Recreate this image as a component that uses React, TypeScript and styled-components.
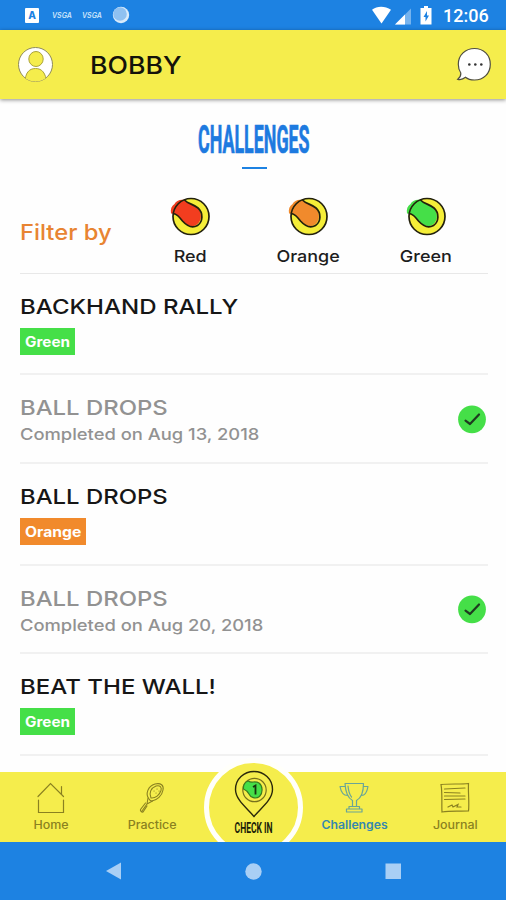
import React from "react";
import styled, { createGlobalStyle } from "styled-components";

const BLUE = "#1d82e2";
const YELLOW = "#f5ed4c";
const GREEN = "#45df48";
const ORANGE = "#f18a2c";
const RED = "#f23d1f";
const OLIVE = "#8a8120";

const GlobalStyle = createGlobalStyle`
  * { box-sizing: border-box; }
  body { margin: 0; background: #fff; font-family: Inter, "Liberation Sans", sans-serif; }
`;

const Screen = styled.div`
  display: flex;
  flex-direction: column;
  width: 506px;
  height: 900px;
  overflow: hidden;
  background: #fefefe;
`;

/* Inline text stretched horizontally to imitate wide and condensed faces. */
const Stretch = styled.span<{ $x: number; $origin?: string }>`
  display: inline-block;
  white-space: nowrap;
  transform: scaleX(${(p) => p.$x});
  transform-origin: ${(p) => p.$origin ?? "left"} center;
`;

const StatusBar = styled.div`
  display: flex;
  flex: none;
  align-items: center;
  justify-content: space-between;
  height: 30px;
  padding: 0 18px 0 25px;
  background: ${BLUE};
`;

const StatusGroup = styled.div<{ $gap: number }>`
  display: flex;
  align-items: center;
  gap: ${(p) => p.$gap}px;
`;

const AppBadge = styled.div`
  width: 14px;
  height: 15px;
  margin-right: 2px;
  border-radius: 1px;
  background: #fff;
  color: ${BLUE};
  font-size: 10px;
  font-weight: 800;
  line-height: 15px;
  text-align: center;
`;

const TinyLogo = styled.span`
  width: 19px;
  padding-top: 1px;
  color: #cfe5fa;
  font-size: 7px;
  font-style: italic;
  font-weight: 600;
  line-height: 10px;
`;

const Clock = styled.span`
  width: 45px;
  margin-left: 4px;
  color: #fff;
  font-family: Roboto, sans-serif;
  font-size: 18px;
  font-weight: 500;
  line-height: 20px;
  padding-top: 2px;
`;

const Header = styled.header`
  display: flex;
  flex: none;
  align-items: center;
  height: 69px;
  padding: 0 14px 0 17px;
  background: ${YELLOW};
  box-shadow: 0 1px 4px rgba(0, 0, 0, 0.45);
`;

const UserName = styled.div`
  flex: 1;
  margin: 2px 0 0 36px;
  color: #14130a;
  font-size: 24px;
  font-weight: 500;
  line-height: 30px;
`;

const Content = styled.main`
  flex: 1;
  min-height: 0;
  padding: 0 18px 0 20px;
`;

const Title = styled.h1`
  display: flex;
  justify-content: center;
  height: 40px;
  margin: 21px 0 0;
  color: #1d7ae0;
  font-family: Roboto, sans-serif;
  font-size: 38px;
  font-weight: 700;
  line-height: 40px;
  -webkit-text-stroke: 0.7px #1d7ae0;
`;

const Underline = styled.div`
  width: 25px;
  height: 2px;
  margin: 7px auto 0;
  background: ${BLUE};
`;

const Filters = styled.div`
  display: flex;
  height: 105px;
  border-bottom: 1px solid #e8e8e8;
`;

const FilterLabel = styled.div`
  width: 111px;
  padding-top: 49px;
  color: #e88432;
  font-size: 22px;
  font-weight: 500;
  line-height: 28px;
`;

const FilterOption = styled.div`
  display: flex;
  flex-direction: column;
  align-items: center;
  width: 118px;
  padding-top: 26px;
  color: #1d1d1d;
  font-size: 16.5px;
  font-weight: 500;
  line-height: 20px;
`;

const BallSlot = styled.div`
  height: 51px;
`;

const Row = styled.section<{ $h: number }>`
  display: flex;
  align-items: center;
  justify-content: space-between;
  height: ${(p) => p.$h}px;
  border-bottom: 2px solid #f1f1f1;
`;

const RowBody = styled.div`
  align-self: flex-start;
  padding-top: 21px;
`;

const RowTitle = styled.div<{ $done?: boolean }>`
  color: ${(p) => (p.$done ? "#929292" : "#161616")};
  font-size: 20.5px;
  font-weight: ${(p) => (p.$done ? 450 : 480)};
  line-height: 24px;
`;

const Completed = styled.div`
  margin-top: 4px;
  color: #929292;
  font-size: 16px;
  font-weight: 500;
  line-height: 20px;
`;

const Tag = styled.div<{ $color: string; $w: number }>`
  width: ${(p) => p.$w}px;
  height: 27px;
  margin-top: 9px;
  padding-left: 5px;
  background: ${(p) => p.$color};
  color: #fff;
  font-size: 14px;
  font-weight: 650;
  line-height: 28px;
`;

const TabBar = styled.nav`
  position: relative;
  display: grid;
  flex: none;
  grid-template-columns: repeat(5, 1fr);
  height: 70px;
  background: ${YELLOW};
`;

const Tab = styled.div<{ $active?: boolean }>`
  display: flex;
  flex-direction: column;
  align-items: center;
  padding-top: 9px;
  color: ${(p) => (p.$active ? "#3588ae" : OLIVE)};
  font-size: 11.3px;
  font-weight: ${(p) => (p.$active ? 600 : 550)};
  line-height: 16px;
`;

const TabIcon = styled.div`
  height: 36px;
`;

/* Raised disc that overlaps the list above and is cut off by the system bar. */
const CheckInClip = styled.div`
  position: absolute;
  left: 204px;
  bottom: 0;
  width: 99px;
  height: 84px;
  overflow: hidden;
`;

const CheckInDisc = styled.div`
  display: flex;
  flex-direction: column;
  align-items: center;
  width: 99px;
  height: 99px;
  padding-top: 7px;
  border: 5px solid #fffffa;
  border-radius: 50%;
  background: ${YELLOW};
`;

const CheckInLabel = styled.div`
  display: flex;
  justify-content: center;
  margin-top: 2px;
  color: #201e08;
  font-family: Roboto, sans-serif;
  font-size: 15.5px;
  font-weight: 700;
  line-height: 16px;
`;

const SystemBar = styled.div`
  display: flex;
  flex: none;
  align-items: center;
  justify-content: center;
  gap: 123px;
  height: 58px;
  background: ${BLUE};
`;

const Ball = ({ color }: { color: string }) => (
  <svg width="42" height="42" viewBox="0 0 42 42" fill="none">
    <circle cx="22" cy="21.500" r="17.800" fill="#f5ee38" />
    <path d="M2 18.500C1.300 14 2.500 11 5.500 9C7 6 11 4 15.500 5C19 9 24 9 28 12.500C33 17 33.500 25 28 29.500C23 33 18 30.500 14 26C10.500 22 8 19 2 18.500Z" fill={color} />
    <path d="M15.500 5C19 9 24.500 9 29 13C34.500 18 34 27 28.500 30.500C23 33.500 17.500 30.500 13.500 26C10.500 22 8 19 4.500 18.500" stroke="#23210c" strokeWidth="1.700" />
    <circle cx="22" cy="21.500" r="18" stroke="#23210c" strokeWidth="1.700" />
  </svg>
);

const CheckBadge = () => (
  <svg width="30" height="30" viewBox="0 0 30 30" fill="none">
    <circle cx="14" cy="15.300" r="13.900" fill={GREEN} />
    <path d="M7.500 16.700L12 20L21 10.500" stroke="#1f3a20" strokeWidth="2.200" strokeLinecap="round" strokeLinejoin="round" />
  </svg>
);

const AvatarIcon = () => (
  <svg width="37" height="37" viewBox="0 0 37 37" fill="none">
    <defs>
      <clipPath id="avatar-disc"><circle cx="18.500" cy="18.500" r="17" /></clipPath>
    </defs>
    <circle cx="18.500" cy="18.500" r="17" fill="#fff" stroke="#8f8b5a" strokeWidth="1" />
    <g clipPath="url(#avatar-disc)" fill={YELLOW} stroke="#aaa23b" strokeWidth="1">
      <ellipse cx="19" cy="13" rx="7.200" ry="7.500" />
      <path d="M8 37C8 27 12 22.500 18.500 22.500S29 27 29.500 37Z" />
    </g>
  </svg>
);

const ChatIcon = () => (
  <svg width="36" height="37" viewBox="0 0 36 37" fill="none">
    <path d="M18.500 2.500C27.500 2.500 34.300 9 34.300 18.300S27.500 34 18.500 34C14.500 34 11.500 33 9.500 31.300C7.500 33 4.500 34 1.800 33.300C4 31.500 5 29.500 4.800 27C3 24.500 2.300 21.500 2.300 18.300C2.300 9 9.500 2.500 18.500 2.500Z" fill="#fff" stroke="#504f42" strokeWidth="1.200" />
    <g fill="#333"><circle cx="13.300" cy="18.500" r="1.300" /><circle cx="19.300" cy="18.500" r="1.300" /><circle cx="25.300" cy="18.500" r="1.300" /></g>
  </svg>
);

const HomeIcon = () => (
  <svg width="30" height="34" viewBox="0 0 30 34" fill="none" stroke={OLIVE} strokeWidth="1.200" strokeLinecap="round">
    <path d="M2 15.500L14.500 2.500L27.500 15.500M25.500 5.500V13M2.500 19V31.500H27.500V19" />
  </svg>
);

const RacketIcon = () => (
  <svg width="30" height="34" viewBox="0 0 30 34" fill="none" stroke={OLIVE} strokeWidth="1.100" strokeLinecap="round">
    <path d="M12 18C8 13 11 5 18 3C24 1.500 27 4.500 26 9C25 15 20 19 15 20C13.500 20 12.500 19 12 18Z" />
    <path d="M14 17C11.500 12 14 7 19 5C23 4 25 6 24 9.500C22.500 14 18.500 17.500 14 17ZM11 17L10 23L15.500 20M10 23L5 30M8.500 22L3.500 28.500C3 29.500 4.500 31.500 6 31L10 25" />
    <path d="M17 10h.1M20 8h.1M19 12h.1M22 10h.1" />
  </svg>
);

const TrophyIcon = () => (
  <svg width="32" height="34" viewBox="0 0 32 34" fill="none" stroke="#6ba596" strokeWidth="1.200" strokeLinecap="round" strokeLinejoin="round">
    <path d="M7 2.500H25.500C25.500 11 24 16.500 18.500 19.500V25M7 2.500C7.500 11 9 16.500 14.500 19.500V25M7 5.500H2C3 11 5.500 14.500 9.500 14.500M25.500 5.500H30C29 11 27 14.500 23.500 14.500M11 25.500H21.500V28H24V31H8.500V28H11ZM11 28H21.500" />
    <path d="M10 5C10.500 10 11 13 13.500 16" />
  </svg>
);

const JournalIcon = () => (
  <svg width="32" height="34" viewBox="0 0 32 34" fill="none" stroke={OLIVE} strokeWidth="1.200" strokeLinecap="round">
    <path d="M2 3.500C12 2.500 21 3.500 29.500 2.500C29 12 30.500 22 29.500 30C20 30.500 12 29.500 3 31C2.500 22 3.500 12 2 3.500Z" />
    <path d="M5.500 8L26 7M5.500 11.500L21 12M5.500 15H26M5.500 18.500L26 18M9 26L13 24L14 26L19 23.500L18 26H22" />
  </svg>
);

const PinIcon = () => (
  <svg width="42" height="48" viewBox="0 0 42 48" fill="none">
    <path d="M21 46.500C15 39 2.500 30 2.500 19.500C2.500 9 11 1.500 21 1.500S39.500 9 39.500 19.500C39.500 30 27 39 21 46.500Z" stroke="#2a280b" strokeWidth="1.400" />
    <circle cx="21.500" cy="20" r="11.700" stroke="#77711d" strokeWidth="1.200" />
    <path d="M10.500 19C10 15 12 11.500 15.500 11C18 13.500 22 10.500 26 13C30 16 30 23 26.500 26.500C22.500 29.500 17.500 27.500 16 24C14.500 21.500 13 20 10.500 19Z" fill={GREEN} stroke="#3b7b1e" strokeWidth="1.200" />
    <path d="M20 17L22.500 15.500V24.500" stroke="#16330e" strokeWidth="1.800" />
  </svg>
);

interface Challenge {
  name: string;
  scale: number;
  height: number;
  completed?: string;
  tag?: { label: string; color: string; width: number; scale: number };
}

const green = { label: "Green", color: GREEN, width: 55, scale: 1.09 };

const CHALLENGES: Challenge[] = [
  { name: "BACKHAND RALLY", scale: 1.172, height: 101, tag: green },
  { name: "BALL DROPS", scale: 1.165, height: 89, completed: "Completed on Aug 13, 2018" },
  { name: "BALL DROPS", scale: 1.165, height: 102, tag: { label: "Orange", color: ORANGE, width: 66, scale: 1.12 } },
  { name: "BALL DROPS", scale: 1.165, height: 88, completed: "Completed on Aug 20, 2018" },
  { name: "BEAT THE WALL!", scale: 1.172, height: 102, tag: green },
];

const FILTERS = [
  { label: "Red", color: RED },
  { label: "Orange", color: ORANGE },
  { label: "Green", color: GREEN },
];

export default function App() {
  return (
    <Screen>
      <GlobalStyle />
      <StatusBar>
        <StatusGroup $gap={11}>
          <AppBadge>A</AppBadge>
          <TinyLogo>VSGA</TinyLogo>
          <TinyLogo>VSGA</TinyLogo>
          <svg width="18" height="18" viewBox="0 0 18 18">
            <circle cx="9" cy="9" r="8.200" fill="#d9ebfb" />
            <circle cx="8" cy="8" r="6.800" fill="#8fc1f1" />
          </svg>
        </StatusGroup>
        <StatusGroup $gap={5}>
          <svg width="65" height="20" viewBox="0 0 65 20">
            <path d="M3 4.800C8 .8 16 .8 22 4.800L12.500 18.500Z" fill="#fff" />
            <path d="M26 19.500L42 3.500V19.500Z" fill="#75b3ee" />
            <path d="M26 19.500L36 9.500V19.500Z" fill="#fff" />
            <path d="M55 1h4v2h3.500v16.500h-11V3H55Z" fill="#fff" />
            <path d="M58 6l-3.500 6h2v4.500l3.500-6H58Z" fill={BLUE} />
          </svg>
          <Clock>12:06</Clock>
        </StatusGroup>
      </StatusBar>
      <Header>
        <AvatarIcon />
        <UserName><Stretch $x={1.11}>BOBBY</Stretch></UserName>
        <ChatIcon />
      </Header>
      <Content>
        <Title><Stretch $x={0.47} $origin="center">CHALLENGES</Stretch></Title>
        <Underline />
        <Filters>
          <FilterLabel><Stretch $x={1.08}>Filter by</Stretch></FilterLabel>
          {FILTERS.map((f) => (
            <FilterOption key={f.label}>
              <BallSlot><Ball color={f.color} /></BallSlot>
              <Stretch $x={1.09} $origin="center">{f.label}</Stretch>
            </FilterOption>
          ))}
        </Filters>
        {CHALLENGES.map((c, i) => (
          <Row key={i} $h={c.height}>
            <RowBody>
              <RowTitle $done={!!c.completed}><Stretch $x={c.scale}>{c.name}</Stretch></RowTitle>
              {c.completed && <Completed><Stretch $x={1.147}>{c.completed}</Stretch></Completed>}
              {c.tag && (
                <Tag $color={c.tag.color} $w={c.tag.width}><Stretch $x={c.tag.scale}>{c.tag.label}</Stretch></Tag>
              )}
            </RowBody>
            {c.completed && <CheckBadge />}
          </Row>
        ))}
      </Content>
      <TabBar>
        <Tab><TabIcon><HomeIcon /></TabIcon><Stretch $x={1.1} $origin="center">Home</Stretch></Tab>
        <Tab><TabIcon><RacketIcon /></TabIcon><Stretch $x={1.1} $origin="center">Practice</Stretch></Tab>
        <span />
        <Tab $active><TabIcon><TrophyIcon /></TabIcon><Stretch $x={1.08} $origin="center">Challenges</Stretch></Tab>
        <Tab><TabIcon><JournalIcon /></TabIcon><Stretch $x={1.1} $origin="center">Journal</Stretch></Tab>
        <CheckInClip>
          <CheckInDisc>
            <PinIcon />
            <CheckInLabel><Stretch $x={0.55} $origin="center">CHECK IN</Stretch></CheckInLabel>
          </CheckInDisc>
        </CheckInClip>
      </TabBar>
      <SystemBar>
        <svg width="17" height="18" viewBox="0 0 17 18"><path d="M1 9L16 .5V17.500Z" fill="#a9cff5" /></svg>
        <svg width="17" height="17" viewBox="0 0 17 17"><circle cx="8.500" cy="8.500" r="8.200" fill="#a9cff5" /></svg>
        <svg width="17" height="17" viewBox="0 0 17 17"><rect x=".5" y=".5" width="15.500" height="15.500" fill="#a9cff5" /></svg>
      </SystemBar>
    </Screen>
  );
}
